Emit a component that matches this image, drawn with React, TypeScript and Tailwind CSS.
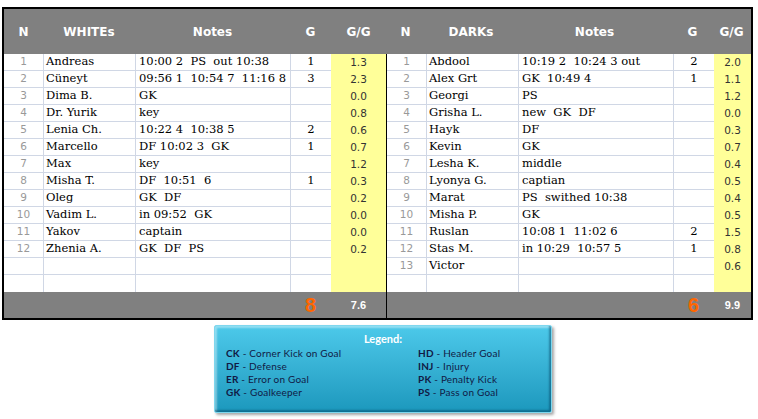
type Row = { n?: number; name?: string; notes?: string; g?: string; gg?: string }

const whites: Row[] = [
  { n: 1, name: "Andreas", notes: "10:00 2  PS  out 10:38", g: "1", gg: "1.3" },
  { n: 2, name: "Cüneyt", notes: "09:56 1  10:54 7  11:16 8", g: "3", gg: "2.3" },
  { n: 3, name: "Dima B.", notes: "GK", gg: "0.0" },
  { n: 4, name: "Dr. Yurik", notes: "key", gg: "0.8" },
  { n: 5, name: "Lenia Ch.", notes: "10:22 4  10:38 5", g: "2", gg: "0.6" },
  { n: 6, name: "Marcello", notes: "DF 10:02 3  GK", g: "1", gg: "0.7" },
  { n: 7, name: "Max", notes: "key", gg: "1.2" },
  { n: 8, name: "Misha T.", notes: "DF  10:51  6", g: "1", gg: "0.3" },
  { n: 9, name: "Oleg", notes: "GK  DF", gg: "0.2" },
  { n: 10, name: "Vadim L.", notes: "in 09:52  GK", gg: "0.0" },
  { n: 11, name: "Yakov", notes: "captain", gg: "0.0" },
  { n: 12, name: "Zhenia A.", notes: "GK  DF  PS", gg: "0.2" },
  {},
  {},
]

const darks: Row[] = [
  { n: 1, name: "Abdool", notes: "10:19 2  10:24 3 out", g: "2", gg: "2.0" },
  { n: 2, name: "Alex Grt", notes: "GK  10:49 4", g: "1", gg: "1.1" },
  { n: 3, name: "Georgi", notes: "PS", gg: "1.2" },
  { n: 4, name: "Grisha L.", notes: "new  GK  DF", gg: "0.0" },
  { n: 5, name: "Hayk", notes: "DF", gg: "0.3" },
  { n: 6, name: "Kevin", notes: "GK", gg: "0.7" },
  { n: 7, name: "Lesha K.", notes: "middle", gg: "0.4" },
  { n: 8, name: "Lyonya G.", notes: "captian", gg: "0.5" },
  { n: 9, name: "Marat", notes: "PS  swithed 10:38", gg: "0.4" },
  { n: 10, name: "Misha P.", notes: "GK", gg: "0.5" },
  { n: 11, name: "Ruslan", notes: "10:08 1  11:02 6", g: "2", gg: "1.5" },
  { n: 12, name: "Stas M.", notes: "in 10:29  10:57 5", g: "1", gg: "0.8" },
  { n: 13, name: "Victor", gg: "0.6" },
  {},
]

const legend = [
  ["CK", "Corner Kick on Goal", "HD", "Header Goal"],
  ["DF", "Defense", "INJ", "Injury"],
  ["ER", "Error on Goal", "PK", "Penalty Kick"],
  ["GK", "Goalkeeper", "PS", "Pass on Goal"],
]

function Team({ title, rows, total, avg, ggW, divider }: { title: string; rows: Row[]; total: string; avg: string; ggW: string; divider?: boolean }) {
  return (
    <div className="flex flex-col">
      <div className="flex h-[45px] items-center bg-[#808080] font-['DejaVu_Sans',sans-serif] text-[12px] font-bold text-white">
        <div className="w-[39px] text-center">N</div>
        <div className="w-[92px] text-center">{title}</div>
        <div className="w-[155px] text-center">Notes</div>
        <div className="w-[41px] text-center">G</div>
        <div className={`${ggW} text-center`}>G/G</div>
      </div>
      <div className={divider ? "border-l border-black" : ""}>
        {rows.map((r, i) => (
          <div key={i} className="flex h-[17px]">
            <div className={`flex w-[39px] items-center justify-center font-['DejaVu_Sans',sans-serif] text-[10.5px] text-[#999] ${i < rows.length - 1 ? "border-b border-[#d0d7e5]" : ""}`}>
              {r.n}
            </div>
            <div className={`flex w-[92px] items-center border-l border-[#d0d7e5] pl-[2px] font-['DejaVu_Serif',serif] text-[11.5px] text-black ${i < rows.length - 1 ? "border-b" : ""}`}>
              {r.name}
            </div>
            <div className={`flex w-[155px] items-center whitespace-pre border-l border-[#d0d7e5] pl-[3px] font-['DejaVu_Serif',serif] text-[11.5px] text-black ${i < rows.length - 1 ? "border-b" : ""}`}>
              {r.notes}
            </div>
            <div className={`flex w-[41px] items-center justify-center border-l border-[#d0d7e5] font-['DejaVu_Serif',serif] text-[11.5px] text-black ${i < rows.length - 1 ? "border-b" : ""}`}>
              {r.g}
            </div>
            <div className={`flex ${ggW} items-center justify-center bg-[#ffff99] font-['DejaVu_Sans',sans-serif] text-[10.5px] text-[#333]`}>
              {r.gg}
            </div>
          </div>
        ))}
      </div>
      <div className={`flex h-[26px] items-center bg-[#808080] ${divider ? "border-l border-black" : ""}`}>
        <div className="w-[286px]" />
        <div className="w-[41px] text-center font-['Liberation_Sans',sans-serif] text-[20px] font-bold text-[#ff6600]">{total}</div>
        <div className={`${ggW} text-center font-['Liberation_Sans',sans-serif] text-[11px] font-bold text-white`}>{avg}</div>
      </div>
    </div>
  )
}

export default function App() {
  return (
    <div className="h-[419px] w-[758px] bg-white pl-[2px] pt-[7px]">
      <div className="flex w-[751px] border-2 border-black">
        <Team title="WHITEs" rows={whites} total="8" avg="7.6" ggW="w-[55px]" />
        <Team title="DARKs" rows={darks} total="6" avg="9.9" ggW="w-[37px]" divider />
      </div>
      <div className="ml-[212px] mt-[5px] w-[338px] h-[88px] rounded-[2px] border border-[#7fd7ee] bg-gradient-to-b from-[#4cc9ea] to-[#1b98bd] pt-[6px] shadow-[inset_-2px_-2px_2px_rgba(0,60,90,0.45),inset_2px_2px_2px_rgba(255,255,255,0.4),2px_2px_3px_rgba(0,0,0,0.35)] font-['Lato',sans-serif]">
        <div className="text-center text-[11px] font-bold leading-[14px] text-white">Legend:</div>
        <div className="mt-[1px] grid grid-cols-[192px_1fr] pl-[11px] text-[10px] leading-[13px] tracking-[0.2px] text-[#111a45]">
          {legend.map((l, i) => (
            <div key={i} className="contents">
              <div>
                <span className="font-bold">{l[0]}</span> - {l[1]}
              </div>
              <div>
                <span className="font-bold">{l[2]}</span> - {l[3]}
              </div>
            </div>
          ))}
        </div>
      </div>
    </div>
  )
}
